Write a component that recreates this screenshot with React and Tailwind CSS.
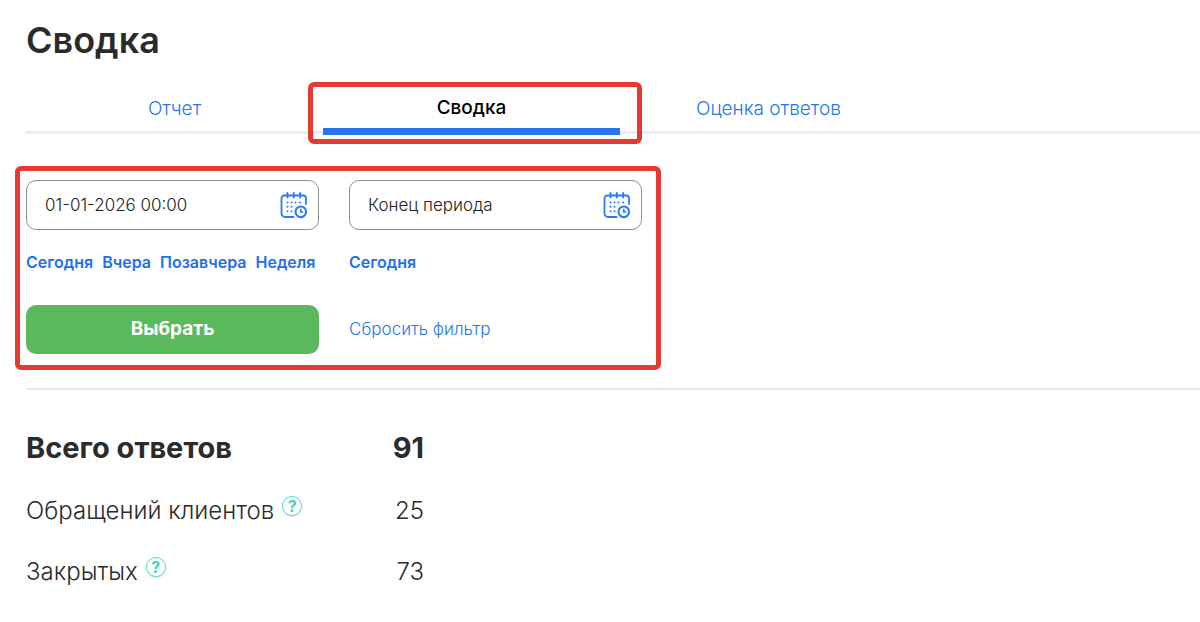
import React from 'react';

// Tabs shown under the page title
const tabs = [
  { id: 'report', label: 'Отчет' },
  { id: 'summary', label: 'Сводка' },
  { id: 'rating', label: 'Оценка ответов' },
];

// Summary rows
const stats = [
  { label: 'Обращений клиентов', value: 25 },
  { label: 'Закрытых', value: 73 },
];

/**
 * Calendar icon with a small clock in the corner
 */
const CalendarClockIcon = () => (
  <svg viewBox="0 0 28 28" className="h-7 w-7" fill="none" stroke="#2b7bf0" strokeLinecap="round" aria-hidden="true">
    <path d="M13.5 26H5a3.5 3.5 0 0 1-3.5-3.5V7.3A2.8 2.8 0 0 1 4.3 4.5h19A2.8 2.8 0 0 1 26 7.3V13" strokeWidth="1.8" />
    <path d="M7.5 2v4.5M13.8 2v4.5M20.2 2v4.5" strokeWidth="1.9" />
    <g fill="#2b7bf0" stroke="none">
      <circle cx="7.5" cy="11.5" r="1" />
      <circle cx="11.5" cy="11.5" r="1" />
      <circle cx="15.5" cy="11.5" r="1" />
      <circle cx="20" cy="11.5" r="1" />
      <circle cx="7.5" cy="15.8" r="1" />
      <circle cx="11.5" cy="15.8" r="1" />
      <circle cx="7.5" cy="20.2" r="1" />
      <circle cx="11.5" cy="20.2" r="1" />
    </g>
    <circle cx="20.8" cy="20.8" r="5.3" strokeWidth="2.1" />
    <path d="M20.8 18.4v2.6h1.8" strokeWidth="1.7" strokeLinejoin="round" />
  </svg>
);

/**
 * Red frame drawn over a highlighted area
 */
const Highlight = ({ className }) => (
  <div className={`pointer-events-none absolute rounded-md border-5 border-[#e53a31] ${className}`} />
);

/**
 * Text field for a date with the calendar button on the right
 */
const DateField = ({ id, label, value, shortcuts }) => (
  <div>
    <div className="relative h-[50px]">
      <input
        id={id}
        type="text"
        aria-label={label}
        defaultValue={value}
        placeholder={label}
        className="h-full w-full rounded-[10px] border border-[#8e8e8e] pr-12 pl-[18px] text-[17px] font-light text-[#222] outline-none placeholder:text-[#222] placeholder:opacity-100"
      />
      <button type="button" aria-label={`${label}: календарь`} className="absolute inset-y-0 right-[11px]">
        <CalendarClockIcon />
      </button>
    </div>
    <div className="mt-5 flex gap-[9px]">
      {shortcuts.map((name) => (
        <button key={name} type="button" className="text-base font-semibold whitespace-nowrap text-[#1f6fee]">
          {name}
        </button>
      ))}
    </div>
  </div>
);

const HelpButton = () => (
  <button
    type="button"
    aria-label="Подсказка"
    className="mb-2.5 ml-2 flex h-5 w-5 shrink-0 items-center justify-center rounded-full border border-[#4bdccb] text-base leading-none font-bold text-[#3fd5c4] shadow-sm"
  >
    ?
  </button>
);

const App = () => {
  return (
    <main className="min-h-screen overflow-x-hidden bg-white pt-5 pl-[26px] font-['Inter','Liberation_Sans',sans-serif] text-[#2b2b2b]">
      <h1 className="text-4xl font-semibold">Сводка</h1>

      {/* Tabs */}
      <nav className="mt-5 flex h-[54px] border-b-3 border-[#ededed]">
        {tabs.map(({ id, label }) => (
          <div key={id} className="relative w-[297px]">
            <a
              href={`#${id}`}
              className={`flex items-center justify-center text-[19px] ${
                id === 'summary'
                  ? 'h-[55px] border-b-7 border-[#2575ee] pt-2 font-medium text-black'
                  : 'h-[54px] pt-1 font-light text-[#2575ee]'
              }`}
            >
              {label}
            </a>
            {id === 'summary' && <Highlight className="top-[2px] -right-[22px] -bottom-[13px] -left-[15px]" />}
          </div>
        ))}
      </nav>

      {/* Period filter */}
      <form className="relative mt-[46px] grid w-fit grid-cols-[293px_293px] gap-x-[30px] gap-y-[31px]">
        <DateField
          id="start"
          label="Начало периода"
          value="01-01-2026 00:00"
          shortcuts={['Сегодня', 'Вчера', 'Позавчера', 'Неделя']}
        />
        <DateField id="end" label="Конец периода" shortcuts={['Сегодня']} />
        <button type="button" className="h-[49px] rounded-[10px] bg-[#5cb85c] text-[19px] font-bold text-white">
          Выбрать
        </button>
        <button type="reset" className="justify-self-start text-[17px] font-light text-[#2575ee]">
          Сбросить фильтр
        </button>
        <Highlight className="-top-[14px] -right-[19px] -bottom-[16px] -left-[11px]" />
      </form>

      <hr className="mt-[34px] border-t-2 border-[#e6e6e6]" />

      {/* Totals */}
      <table className="mt-[26px] w-[398px] text-2xl">
        <thead>
          <tr className="h-16 text-[29px]">
            <th scope="row" className="text-left font-bold">Всего ответов</th>
            <td className="text-right font-bold">91</td>
          </tr>
        </thead>
        <tbody>
          {stats.map(({ label, value }) => (
            <tr key={label} className="h-[61px]">
              <th scope="row" className="font-light">
                <div className="flex items-center">
                  <span className="whitespace-nowrap">{label}</span>
                  <HelpButton />
                </div>
              </th>
              <td className="text-right font-light">{value}</td>
            </tr>
          ))}
        </tbody>
      </table>
    </main>
  );
};

export default App;
